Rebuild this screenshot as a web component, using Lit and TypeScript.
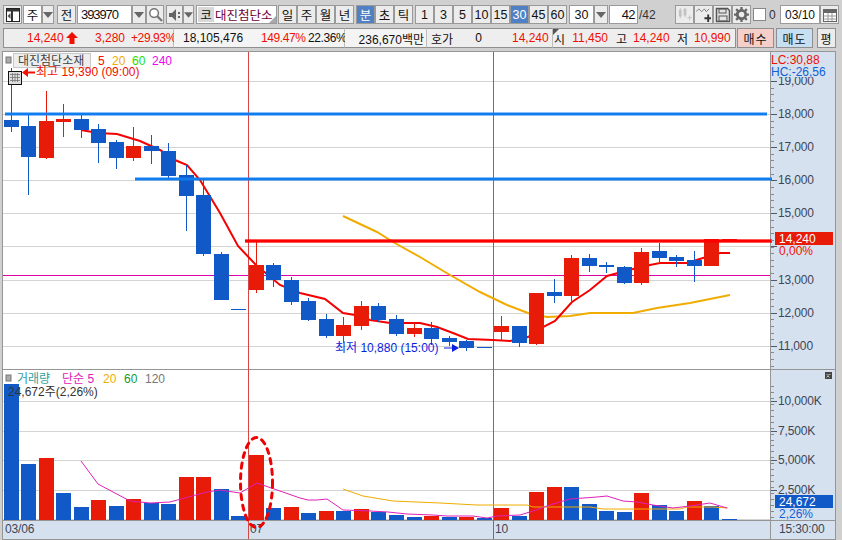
import { LitElement, html, css, svg } from "lit";
import { customElement } from "lit/decorators.js";

const BLUE = "#1259c8";
const RED = "#e81a08";

// x-left, colour, bodyTop, bodyBottom, wickTop, wickBottom
const CANDLES: [number, string, number, number, number, number][] = [
  [4, "b", 120, 127, 68, 132], [21, "b", 126, 157, 114, 195], [39, "r", 121, 158, 91, 159],
  [56, "r", 119, 122, 104, 137], [74, "b", 119, 130, 114, 138], [91, "b", 129, 143, 124, 163],
  [109, "b", 142, 158, 140, 169], [126, "r", 146, 158, 127, 161], [144, "b", 146, 151, 135, 164],
  [161, "b", 151, 176, 143, 179], [179, "b", 175, 196, 165, 231], [196, "b", 195, 254, 180, 256],
  [214, "b", 254, 300, 252, 300], [231, "b", 309, 310, 309, 310], [249, "r", 265, 290, 241, 293],
  [266, "b", 265, 280, 263, 287], [284, "b", 280, 302, 277, 305], [301, "b", 301, 320, 298, 321],
  [319, "b", 319, 336, 314, 338], [336, "r", 325, 336, 317, 343], [354, "r", 306, 326, 301, 330],
  [371, "b", 306, 320, 303, 322], [389, "b", 319, 334, 315, 336], [407, "r", 328, 334, 322, 337],
  [424, "b", 328, 339, 322, 345], [442, "b", 338, 342, 336, 346], [459, "b", 341, 348, 340, 351],
  [477, "b", 347, 348, 347, 348], [494, "r", 326, 332, 316, 340], [512, "b", 326, 343, 326, 347],
  [529, "r", 293, 344, 293, 345], [547, "b", 292, 296, 279, 303], [564, "r", 258, 296, 255, 301],
  [582, "b", 258, 266, 254, 272], [599, "b", 265, 267, 262, 273], [617, "b", 267, 283, 266, 284],
  [634, "r", 252, 283, 248, 285], [652, "b", 251, 258, 243, 262], [669, "b", 257, 261, 255, 267],
  [687, "b", 260, 266, 251, 282], [704, "r", 239, 266, 239, 266], [722, "r", 239, 240, 239, 240],
];

const VOLUME: [number, string, number][] = [
  [4, "b", 384], [21, "b", 464], [39, "r", 458], [56, "b", 493], [74, "b", 507], [91, "r", 500],
  [109, "b", 506], [126, "r", 499], [144, "b", 503], [161, "b", 504], [179, "r", 477], [196, "r", 477],
  [214, "b", 489], [231, "b", 516], [249, "r", 455], [266, "b", 508], [284, "r", 507], [301, "b", 513],
  [319, "r", 511], [336, "b", 511], [354, "r", 509], [371, "b", 512], [389, "b", 515], [407, "b", 517],
  [424, "r", 516], [442, "b", 517], [459, "r", 517], [477, "b", 518], [494, "r", 508], [512, "b", 516],
  [529, "r", 492], [547, "r", 487], [564, "b", 487], [582, "b", 504], [599, "b", 511], [617, "b", 512],
  [634, "r", 493], [652, "b", 505], [669, "b", 511], [687, "r", 501], [704, "b", 506], [722, "b", 519],
];

const MA5 = "81,130 98,133 117,134 140,141 160,150 175,160 187,165 200,180 220,213 238,246 256,265 280,285 300,293 325,299 343,313 355,315 370,320 390,323 403,323 420,323 437,327 453,333 468,339 493,340 510,341 528,337 543,327 555,321 572,302 590,290 607,276 633,269 650,265 660,263 687,263 703,258 720,253 730,253";
const MA20 = "343,216 377,232 393,242 420,257 450,275 480,292 507,305 528,313 547,317 570,316 590,313 633,313 657,308 690,303 730,295";
const VMA5 = "81,461 98,484 130,501 150,503 170,502 207,492 220,490 240,493 257,483 277,490 300,498 308,500 317,500 327,499 343,510 370,511 388,512 407,514 433,515 447,516 473,516 487,518 497,516 520,515 533,511 553,504 570,499 597,497 607,496 623,501 637,502 653,505 673,508 690,506 710,503 727,508";
const VMA20 = "343,489 363,496 393,501 440,503 477,505 527,505 533,507 570,507 590,507 603,509 633,509 680,509 687,507 713,507 728,508";

const PRICE_GRID: [number, string][] = [
  [81, "19,000"], [114, "18,000"], [147, "17,000"], [180, "16,000"], [213, "15,000"],
  [246, ""], [280, "13,000"], [313, "12,000"], [346, "11,000"],
];
const VOL_GRID: [number, string][] = [[401, "10,000K"], [431, "7,500K"], [460, "5,000K"], [490, "2,500K"]];

const caret = html`<svg class="ic" viewBox="0 0 10 6" width="10" height="6"><path d="M0 0h10L5 6z" fill="#666"/></svg>`;

@customElement("app-root")
export class AppRoot extends LitElement {
  static styles = css`
    :host { display: block; width: 842px; height: 540px; background: #d0d0d0; overflow: hidden;
      font: 12px "Liberation Sans", "Noto Sans CJK KR", sans-serif; color: #111; }
    .tb { display: flex; height: 19px; padding: 5px 0 0 3px; box-sizing: content-box; }
    .g { display: flex; height: 19px; align-items: stretch; }
    .m1 { margin-left: 1px; } .m2 { margin-left: 2px; } .m3 { margin-left: 3px; } .m14 { margin-left: 14px; }
    .btn, .fld { box-sizing: border-box; border: 1px solid #9a9a9a; display: flex; align-items: center;
      justify-content: center; background: #ececec; font-size: 12.5px; white-space: nowrap; }
    .fld { background: #fff; }
    .btn.on { background: #4f81c4; color: #fff; }
    .s19 { width: 19px; } .s12 { width: 12px; } .s14 { width: 14px; } .s18 { width: 18px; }
    .s17 { width: 17px; } .s11 { width: 11px; }
    .code { width: 55px; justify-content: flex-start; padding-left: 3px; font-size: 13px; letter-spacing: -1.100px; }
    .sel { width: 25px; } .count { width: 29px; justify-content: flex-end; padding-right: 2px; font-size: 13px; letter-spacing: -.6px; }
    .of { width: 22px; display: flex; align-items: center; padding-left: 1px; color: #333; font-size: 12px; }
    .name { width: 81px; position: relative; justify-content: flex-start; padding: 1px; color: #6e0038;
      overflow: hidden; font-size: 12.500px; }
    .ko { width: 16px; height: 15px; background: #d8d8d8; color: #111; display: flex; align-items: center;
      justify-content: center; margin-right: 1px; flex: none; }
    .corner { position: absolute; right: 0; bottom: 0; width: 0; height: 0;
      border-left: 7px solid transparent; border-bottom: 7px solid #a8a8a8; }
    .dimb { opacity: .75; }
    .chk { width: 13px; height: 13px; margin-top: 3px; background: #fff; border: 1px solid #888; box-sizing: border-box; }
    .zero { width: 10px; padding-left: 3px; display: flex; align-items: center; color: #333; }
    .date { width: 40px; font-size: 12px; }

    .info { display: flex; height: 20px; margin: 4px 0 3px 3px; }
    .sec { box-sizing: border-box; height: 20px; display: flex; align-items: center; background: #eeeeee;
      border-top: 1px solid #8f8f8f; border-bottom: 1px solid #8f8f8f; border-right: 1px solid #bdbdbd; position: relative; }
    .sec.first { border-left: 1px solid #8f8f8f; }
    .a { width: 171px; } .bb { width: 171px; background: #f4f4f4; } .c { width: 82px; background: #f4f4f4; }
    .d { width: 126px; } .e { width: 183px; border-right: 1px solid #8f8f8f; }
    .cell { white-space: nowrap; flex: none; display: block; }
    .cell.r { text-align: right; }
    .pct { letter-spacing: -.4px; }
    .red { color: #f01000; }
    .mark { position: absolute; left: 0; top: 0; width: 0; height: 0;
      border-top: 6px solid #555; border-right: 6px solid transparent; }
    .trade { box-sizing: border-box; height: 20px; border: 1px solid #8f8f8f; display: flex; align-items: center;
      justify-content: center; letter-spacing: 1px; }
    .buy { width: 37px; margin-left: 1px; background: #f5d0ca; }
    .sell { width: 37px; margin-left: 2px; background: #c6dff3; }
    .avg { width: 19px; margin-left: 4px; background: #ececec; }

    .chart { display: block; width: 842px; height: 489px; }
    .t { font: 12px "Liberation Sans", "Noto Sans CJK KR", sans-serif; }
    .ax { fill: #3c4656; letter-spacing: -.15px; }
  `;

  private cell(text: string, left: number, width: number, cls = "") {
    return html`<span class="cell r ${cls}" style="margin-left:${left}px;width:${width}px">${text}</span>`;
  }

  private toolbar() {
    return html`<div class="tb">
      <div class="g"><div class="btn s19">
        <svg viewBox="0 0 14 14" width="14" height="14"><rect x=".5" y=".5" width="13" height="13" fill="#fff" stroke="#222"/><rect x="1" y="1" width="12" height="2.5" fill="#333"/><rect x="5" y="3" width="2" height="10" fill="#333"/><path d="M4.5 5v6L1.5 8z" fill="#555"/></svg>
      </div></div>
      <div class="g m1"><div class="fld s19">주</div><div class="btn s12">${caret}</div></div>
      <div class="g m3"><div class="btn s19">전</div></div>
      <div class="g m1"><div class="fld code">393970</div><div class="btn s14">${caret}</div>
        <div class="btn s18"><svg viewBox="0 0 16 16" width="15" height="15"><circle cx="6.5" cy="6.5" r="4.6" fill="#fff" stroke="#777" stroke-width="1.6"/><path d="M10 10l5 5" stroke="#777" stroke-width="2.4"/></svg></div></div>
      <div class="g m2"><div class="btn s17"><svg viewBox="0 0 14 14" width="14" height="14"><path d="M1 5h3l4-4v12l-4-4H1z" fill="#666"/><rect x="10" y="4" width="2" height="2" fill="#666"/><rect x="10" y="8" width="2" height="2" fill="#666"/></svg></div><div class="btn s11">${caret}</div></div>
      <div class="g m2"><div class="fld name"><span class="ko">코</span>대진첨단소<span class="corner"></span></div></div>
      <div class="g m1">${["일", "주", "월", "년"].map((t) => html`<div class="btn s19">${t}</div>`)}</div>
      <div class="g m2">${["분", "초", "틱"].map((t) => html`<div class="btn s19 ${t === "분" ? "on" : ""}">${t}</div>`)}</div>
      <div class="g m2">${["1", "3", "5", "10", "15", "30", "45", "60"].map((t) => html`<div class="btn s19 ${t === "30" ? "on" : ""}">${t}</div>`)}</div>
      <div class="g m2"><div class="fld sel">30</div><div class="btn s14">${caret}</div></div>
      <div class="g m1"><div class="fld count">42</div><div class="of">/42</div></div>
      <div class="g m14">
        <div class="btn s19"><svg class="dimb" viewBox="0 0 16 16" width="15" height="15"><g fill="#b5b5b5"><rect x="2" y="3" width="3" height="7"/><rect x="3" y="1" width="1" height="11"/><rect x="7" y="2" width="3" height="7"/><rect x="8" y="1" width="1" height="10"/><path d="M11 11h2V9h1v2h2v1h-2v2h-1v-2h-2z"/></g></svg></div>
        <div class="btn s19"><svg viewBox="0 0 16 16" width="15" height="15"><path d="M0 5l3-3 3 3 3-3 2 3 3-3" fill="none" stroke="#777"/><path d="M9 11h3V8h2v3h3v2h-3v3h-2v-3H9z" fill="#333"/></svg></div>
        <div class="btn s19"><svg viewBox="0 0 16 16" width="16" height="16"><path d="M1.500 1.500h11l2 2v11h-13z" fill="#e4e4e4" stroke="#555" stroke-width="1.500"/><rect x="4" y="2" width="7" height="4" fill="none" stroke="#555"/><rect x="4" y="9" width="8" height="5" fill="none" stroke="#555"/></svg></div>
        <div class="btn s19"><svg viewBox="0 0 16 16" width="15" height="15"><circle cx="8" cy="8" r="4.500" fill="none" stroke="#666" stroke-width="3"/><path d="M8 0v3M8 13v3M0 8h3M13 8h3M2.300 2.300l2 2M11.700 11.700l2 2M2.300 13.700l2-2M11.700 4.300l2-2" stroke="#666" stroke-width="2.400"/></svg></div>
      </div>
      <div class="g m2"><div class="chk"></div><div class="zero">0</div></div>
      <div class="g m1"><div class="fld date">03/10</div>
        <div class="btn s19"><svg viewBox="0 0 14 14" width="14" height="14"><rect x=".5" y="1.500" width="13" height="12" fill="#fff" stroke="#666"/><rect x="1" y="2" width="12" height="3" fill="#666"/><path d="M1 8h12M1 11h12M5 5v8M9 5v8" stroke="#999"/></svg></div></div>
    </div>`;
  }

  private infoRow() {
    return html`<div class="info">
      <div class="sec first a">
        ${this.cell("14,240", 23, 36, "red")}
        <svg class="cell" viewBox="0 0 12 12" width="12" height="12" style="margin-left:3px"><path d="M6 0l6 6H8.500v6h-5V6H0z" fill="#f01000"/></svg>
        ${this.cell("3,280", 17, 30, "red")}
        ${this.cell("+29.93%", 6, 42, "red pct")}
      </div>
      <div class="sec bb">
        ${this.cell("18,105,476", 9, 60)}
        ${this.cell("149.47%", 18, 42, "red pct")}
        ${this.cell("22.36%", 5, 35, "pct")}
      </div>
      <div class="sec c">${this.cell("236,670백만", 11, 68)}</div>
      <div class="sec d">
        ${this.cell("호가", 1, 25)}
        ${this.cell("0", 22, 7)}
        ${this.cell("14,240", 30, 36, "red")}
      </div>
      <div class="sec e"><span class="mark"></span>
        ${this.cell("시", 0, 12)}
        ${this.cell("11,450", 7, 36, "red")}
        ${this.cell("고", 7, 12)}
        ${this.cell("14,240", 6, 36, "red")}
        ${this.cell("저", 7, 12)}
        ${this.cell("10,990", 6, 36, "red")}
      </div>
      <div class="trade buy">매수</div>
      <div class="trade sell">매도</div>
      <div class="trade avg">평</div>
    </div>`;
  }

  private chart() {
    const Y0 = 51; // the svg's y origin in page coordinates
    const minorPrice: number[] = [];
    for (let y = 81; y < 366; y += 6.62) minorPrice.push(Math.round(y));
    const minorVol: number[] = [];
    for (let y = 386; y < 520; y += 5.95) minorVol.push(Math.round(y));
    return html`<svg class="chart" viewBox="0 ${Y0} 842 489">
      ${svg`
      <rect x="2" y="51" width="833" height="489" fill="#d6e1ef"/>
      <rect x="3" y="52" width="767" height="317" fill="#fff"/>
      <rect x="3" y="370" width="767" height="150" fill="#fff"/>
      ${PRICE_GRID.map(([y]) => svg`<rect x="3" y="${y}" width="767" height="1" fill="#d4d4d4"/>`)}
      ${VOL_GRID.map(([y]) => svg`<rect x="3" y="${y}" width="767" height="1" fill="#d4d4d4"/>`)}
      <rect x="3" y="519" width="767" height="1" fill="#d4d4d4"/>
      <rect x="3" y="275" width="767" height="1" fill="#e000a8"/>

      <rect x="2" y="51" width="834" height="1" fill="#959595"/>
      <rect x="2" y="369" width="834" height="1" fill="#959595"/>
      <rect x="2" y="520" width="834" height="1" fill="#959595"/>
      <rect x="2" y="539" width="834" height="1" fill="#959595"/>
      <rect x="2" y="51" width="1" height="489" fill="#959595"/>
      <rect x="770" y="51" width="1" height="489" fill="#959595"/>
      <rect x="835" y="51" width="1" height="489" fill="#959595"/>

      <rect x="248" y="52" width="1" height="487" fill="#d84545"/>
      <rect x="493" y="52" width="1" height="487" fill="#c84a4a"/>

      <polyline points="${MA20}" fill="none" stroke="#f0ac00" stroke-width="2"/>
      <polyline points="${MA5}" fill="none" stroke="#f40000" stroke-width="2"/>
      ${CANDLES.map(([x, c, t, b, wt, wb]) => {
        const f = c === "b" ? BLUE : RED;
        return svg`<rect x="${x + 7}" y="${wt}" width="1" height="${wb - wt}" fill="${f}"/><rect x="${x}" y="${t}" width="15" height="${b - t}" fill="${f}"/>`;
      })}

      <g fill="none">
        <path d="M5 114H767M135 179H772" stroke="#0f7cf0" stroke-opacity=".3" stroke-width="4"/>
        <path d="M5 114H767M135 179H772" stroke="#0f7cf0" stroke-width="2.500"/>
        <path d="M245 241H772" stroke="#ff0000" stroke-opacity=".3" stroke-width="4"/>
        <path d="M245 241H772" stroke="#ff0000" stroke-width="3"/>
      </g>

      ${VOLUME.map(([x, c, t]) => svg`<rect x="${x}" y="${t}" width="15" height="${520 - t}" fill="${c === "b" ? BLUE : RED}"/>`)}
      <polyline points="${VMA20}" fill="none" stroke="#f0ac00" stroke-width="1"/>
      <polyline points="${VMA5}" fill="none" stroke="#e020b8" stroke-width="1"/>

      ${minorPrice.map((y) => svg`<rect x="771" y="${y}" width="3" height="1" fill="#808890"/>`)}
      ${minorVol.map((y) => svg`<rect x="771" y="${y}" width="3" height="1" fill="#808890"/>`)}
      ${[...PRICE_GRID, ...VOL_GRID].map(([y, s]) => svg`<rect x="771" y="${y}" width="6" height="1" fill="#505a68"/>
        <text class="t ax" x="778" y="${y + 4}">${s}</text>`)}

      <rect x="771" y="52" width="64" height="25" fill="#d6e1ef"/>
      <text class="t" x="771" y="64" fill="#f01000">LC:30,88</text>
      <text class="t" x="771" y="76" fill="#1060d8">HC:-26,56</text>

      <rect x="775" y="232" width="58" height="13" fill="${RED}"/>
      <text class="t" x="779" y="243" fill="#fff">14,240</text>
      <text class="t" x="779" y="255" fill="#f01000">0,00%</text>

      <rect x="775" y="495" width="58" height="13" fill="${BLUE}"/>
      <text class="t" x="779" y="506" fill="#fff">24,672</text>
      <text class="t" x="779" y="518" fill="#1060d8">2,26%</text>
      <text class="t ax" x="779" y="533">15:30:00</text>
      <rect x="825" y="372" width="7" height="7" fill="#444"/>
      <path d="M826.500 374l1.500 1.500 1.500-1.500 1 1M826.500 377.500l1.500-1.500 1.500 1.500" stroke="#ddd" stroke-width=".8" fill="none"/>

      <rect x="6" y="57" width="5" height="6" fill="#aaa" stroke="#777"/>
      <rect x="13.500" y="53.500" width="77" height="14" fill="#eeeeee" stroke="#c8c8c8"/>
      <text class="t" x="18" y="65" fill="#444">대진첨단소재</text>
      <text class="t" x="98" y="65" fill="#f01000">5</text>
      <text class="t" x="112" y="65" fill="#f0ac00">20</text>
      <text class="t" x="132" y="65" fill="#22e000">60</text>
      <text class="t" x="152" y="65" fill="#f000f0">240</text>

      <rect x="8.500" y="71.500" width="13" height="13" fill="#ddd" stroke="#111"/>
      <path d="M10 74.500h10M10 77.500h10M10 80.500h10M12.500 73v9M15 73v9M17.500 73v9" stroke="#777" stroke-width=".8"/>
      <path d="M22 72.500l6-4.500v3.500h7v2h-7v3.500z" fill="#f01000"/>
      <text class="t" x="36" y="76" fill="#f01000">최고 19,390 (09:00)</text>

      <text class="t" x="335" y="352" fill="#0a1ee0">최저 10,880 (15:00)</text>
      <path d="M444 347.500h8v-3.500l7 4-7 4v-3.500h-8z" fill="#0a1ee0"/>

      <rect x="6" y="375" width="5" height="6" fill="#aaa" stroke="#777"/>
      <text class="t" x="17" y="383" fill="#2f9e9e">거래량</text>
      <text class="t" x="62" y="383" fill="#e020b8">단순 5</text>
      <text class="t" x="103" y="383" fill="#f0ac00">20</text>
      <text class="t" x="124" y="383" fill="#109a30">60</text>
      <text class="t" x="145" y="383" fill="#777">120</text>
      <text class="t" x="8" y="396" fill="#333">24,672주(2,26%)</text>

      <text class="t ax" x="5" y="533">03/06</text>
      <text class="t ax" x="250" y="533">07</text>
      <text class="t ax" x="495" y="533">10</text>

      <ellipse cx="256.500" cy="482.500" rx="16" ry="45" fill="none" stroke="#f00000" stroke-width="3" stroke-dasharray="5 5.500" stroke-linecap="round"/>
      `}
    </svg>`;
  }

  render() {
    return html`${this.toolbar()}${this.infoRow()}${this.chart()}`;
  }
}
